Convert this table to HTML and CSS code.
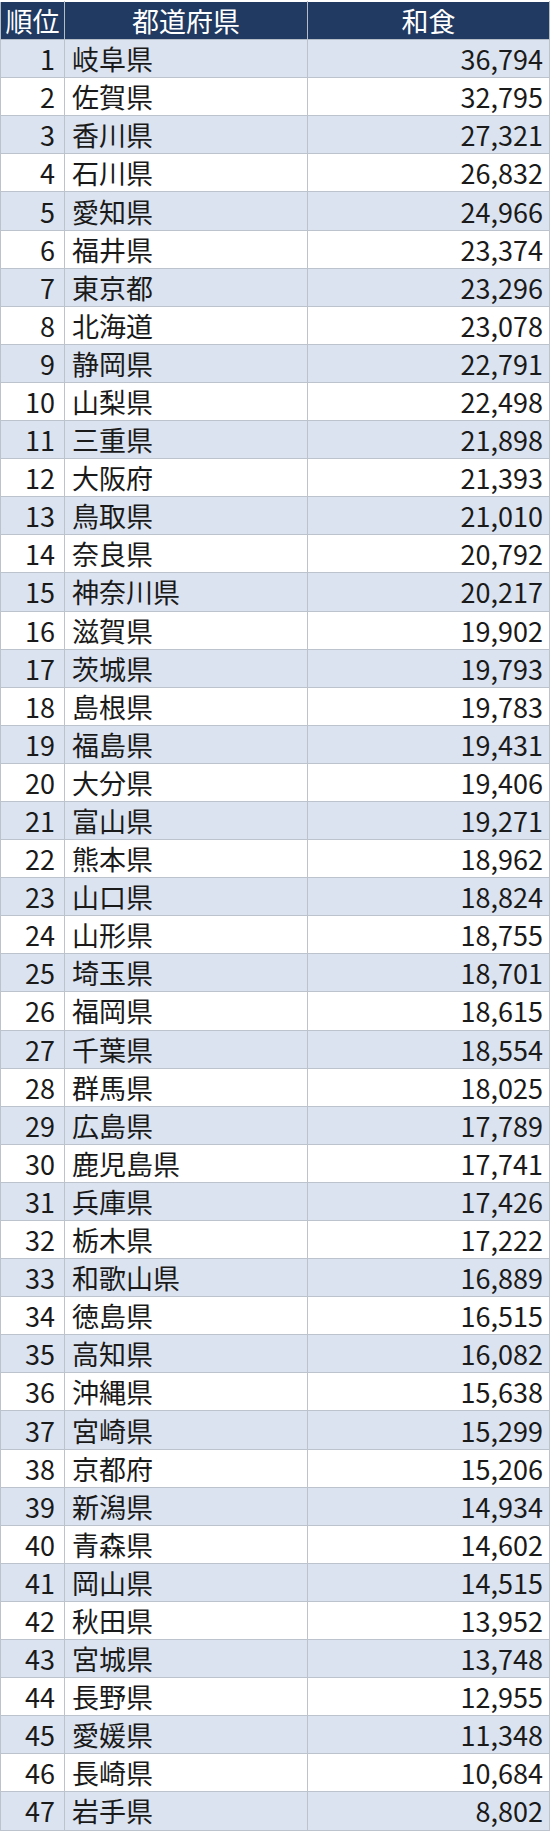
FILE: index.html
```html
<!DOCTYPE html>
<html lang="ja">
<head>
<meta charset="utf-8">
<title>都道府県別 和食</title>
<link rel="stylesheet" href="styles.css">
</head>
<body>
<table class="rank">
<colgroup><col class="c-rank"><col class="c-pref"><col class="c-val"></colgroup>
<thead>
<tr><th>順位</th><th>都道府県</th><th>和食</th></tr>
</thead>
<tbody>
<tr><td class="n">1</td><td class="p">岐阜県</td><td class="v">36,794</td></tr>
<tr><td class="n">2</td><td class="p">佐賀県</td><td class="v">32,795</td></tr>
<tr><td class="n">3</td><td class="p">香川県</td><td class="v">27,321</td></tr>
<tr><td class="n">4</td><td class="p">石川県</td><td class="v">26,832</td></tr>
<tr><td class="n">5</td><td class="p">愛知県</td><td class="v">24,966</td></tr>
<tr><td class="n">6</td><td class="p">福井県</td><td class="v">23,374</td></tr>
<tr><td class="n">7</td><td class="p">東京都</td><td class="v">23,296</td></tr>
<tr><td class="n">8</td><td class="p">北海道</td><td class="v">23,078</td></tr>
<tr><td class="n">9</td><td class="p">静岡県</td><td class="v">22,791</td></tr>
<tr><td class="n">10</td><td class="p">山梨県</td><td class="v">22,498</td></tr>
<tr><td class="n">11</td><td class="p">三重県</td><td class="v">21,898</td></tr>
<tr><td class="n">12</td><td class="p">大阪府</td><td class="v">21,393</td></tr>
<tr><td class="n">13</td><td class="p">鳥取県</td><td class="v">21,010</td></tr>
<tr><td class="n">14</td><td class="p">奈良県</td><td class="v">20,792</td></tr>
<tr><td class="n">15</td><td class="p">神奈川県</td><td class="v">20,217</td></tr>
<tr><td class="n">16</td><td class="p">滋賀県</td><td class="v">19,902</td></tr>
<tr><td class="n">17</td><td class="p">茨城県</td><td class="v">19,793</td></tr>
<tr><td class="n">18</td><td class="p">島根県</td><td class="v">19,783</td></tr>
<tr><td class="n">19</td><td class="p">福島県</td><td class="v">19,431</td></tr>
<tr><td class="n">20</td><td class="p">大分県</td><td class="v">19,406</td></tr>
<tr><td class="n">21</td><td class="p">富山県</td><td class="v">19,271</td></tr>
<tr><td class="n">22</td><td class="p">熊本県</td><td class="v">18,962</td></tr>
<tr><td class="n">23</td><td class="p">山口県</td><td class="v">18,824</td></tr>
<tr><td class="n">24</td><td class="p">山形県</td><td class="v">18,755</td></tr>
<tr><td class="n">25</td><td class="p">埼玉県</td><td class="v">18,701</td></tr>
<tr><td class="n">26</td><td class="p">福岡県</td><td class="v">18,615</td></tr>
<tr><td class="n">27</td><td class="p">千葉県</td><td class="v">18,554</td></tr>
<tr><td class="n">28</td><td class="p">群馬県</td><td class="v">18,025</td></tr>
<tr><td class="n">29</td><td class="p">広島県</td><td class="v">17,789</td></tr>
<tr><td class="n">30</td><td class="p">鹿児島県</td><td class="v">17,741</td></tr>
<tr><td class="n">31</td><td class="p">兵庫県</td><td class="v">17,426</td></tr>
<tr><td class="n">32</td><td class="p">栃木県</td><td class="v">17,222</td></tr>
<tr><td class="n">33</td><td class="p">和歌山県</td><td class="v">16,889</td></tr>
<tr><td class="n">34</td><td class="p">徳島県</td><td class="v">16,515</td></tr>
<tr><td class="n">35</td><td class="p">高知県</td><td class="v">16,082</td></tr>
<tr><td class="n">36</td><td class="p">沖縄県</td><td class="v">15,638</td></tr>
<tr><td class="n">37</td><td class="p">宮崎県</td><td class="v">15,299</td></tr>
<tr><td class="n">38</td><td class="p">京都府</td><td class="v">15,206</td></tr>
<tr><td class="n">39</td><td class="p">新潟県</td><td class="v">14,934</td></tr>
<tr><td class="n">40</td><td class="p">青森県</td><td class="v">14,602</td></tr>
<tr><td class="n">41</td><td class="p">岡山県</td><td class="v">14,515</td></tr>
<tr><td class="n">42</td><td class="p">秋田県</td><td class="v">13,952</td></tr>
<tr><td class="n">43</td><td class="p">宮城県</td><td class="v">13,748</td></tr>
<tr><td class="n">44</td><td class="p">長野県</td><td class="v">12,955</td></tr>
<tr><td class="n">45</td><td class="p">愛媛県</td><td class="v">11,348</td></tr>
<tr><td class="n">46</td><td class="p">長崎県</td><td class="v">10,684</td></tr>
<tr><td class="n">47</td><td class="p">岩手県</td><td class="v">8,802</td></tr>
</tbody>
</table>
</body>
</html>
```
FILE: styles.css
```css
html, body {
  margin: 0;
  padding: 0;
  background: #ffffff;
}
body {
  padding-top: 1px;
  font-family: "Noto Sans CJK JP", "Noto Sans", sans-serif;
  color: #1a1a1a;
}
.rank {
  border-collapse: collapse;
  table-layout: fixed;
  width: 549px;
}
.c-rank { width: 64px; }
.c-pref { width: 243px; }
.c-val { width: 242px; }
.rank th,
.rank td {
  height: 37.1px;
  padding: 0;
  font-size: 27px;
  line-height: 1;
  font-weight: 400;
  white-space: nowrap;
  overflow: hidden;
  border: 1px solid #bcc3cc;
  vertical-align: middle;
}
.rank th {
  background: #203a62;
  color: #ffffff;
  text-align: center;
  border-color: #b4bcc7;
  border-top-color: #ffffff;
}
.rank tbody tr:nth-child(odd) td { background: #dae3ef; }
.rank tbody tr:nth-child(even) td { background: #ffffff; }
.rank td.n { text-align: right; padding-right: 9px; }
.rank td.p { text-align: left; padding-left: 7px; }
.rank td.v { text-align: right; padding-right: 6px; }
```
